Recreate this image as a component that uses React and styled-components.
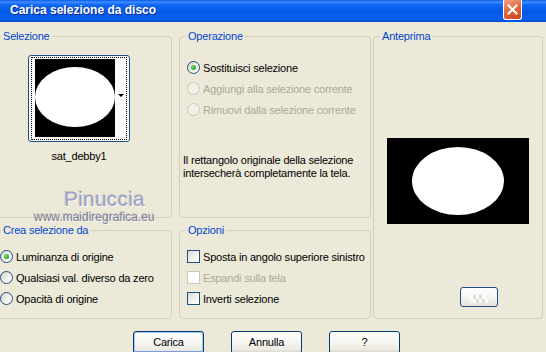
import React from 'react';
import styled, { createGlobalStyle } from 'styled-components';

const GlobalStyle = createGlobalStyle`
  html, body {
    margin: 0;
    padding: 0;
    background: #ece9d8;
    overflow: hidden;
  }
  body {
    font-family: "Liberation Sans", Arial, sans-serif;
    font-size: 11px;
    letter-spacing: -0.2px;
    color: #000;
  }
`;

const Window = styled.div`
  position: relative;
  width: 546px;
  height: 352px;
  overflow: hidden;
  background: #ece9d8;
  display: flex;
  flex-direction: column;
`;

const TitleBar = styled.div`
  flex: none;
  height: 22px;
  box-sizing: border-box;
  padding: 0 24px 2px 10px;
  display: flex;
  align-items: center;
  justify-content: space-between;
  background: linear-gradient(180deg, #0a5ae6 0%, #3d8dff 9%, #1165f2 22%, #0358e8 55%, #0a60f2 85%, #0049d4 100%);
`;

const Title = styled.span`
  font-family: "Liberation Sans", Arial, sans-serif;
  font-weight: bold;
  font-size: 12px;
  letter-spacing: 0;
  color: #fff;
  text-shadow: 1px 1px 0 #0a2a8a;
`;

const CloseButton = styled.div`
  align-self: flex-start;
  width: 19px;
  height: 20px;
  box-sizing: border-box;
  border: 1px solid #fff;
  border-top: none;
  border-radius: 0 0 3px 3px;
  background: linear-gradient(160deg, #f0a486 0%, #e36b43 45%, #c8461f 100%);
  display: flex;
  align-items: center;
  justify-content: center;
`;

const Panels = styled.div`
  display: flex;
  margin: 8px 0 0 -6px;
`;

const Column = styled.div`
  display: flex;
  flex-direction: column;
  gap: 6px;
  width: ${p => p.$w}px;
  margin-left: ${p => p.$ml || 0}px;
`;

const Group = styled.fieldset`
  margin: 0;
  padding: 0;
  box-sizing: border-box;
  height: ${p => p.$h}px;
  width: ${p => p.$w}px;
  margin-left: ${p => p.$ml || 0}px;
  border: 1px solid #d0d0bf;
  border-radius: 4px;
  min-width: 0;
`;

const Legend = styled.legend`
  margin-left: 6px;
  padding: 0 2px;
  line-height: 13px;
  color: #0046d5;
`;

const GroupBody = styled.div`
  display: flex;
  flex-direction: column;
  align-items: flex-start;
  padding: ${p => p.$pad};
`;

const ThumbWrap = styled.div`
  display: flex;
  flex-direction: column;
  align-items: center;
  margin-top: 12px;
`;

const ThumbButton = styled.div`
  width: 102px;
  height: 87px;
  box-sizing: border-box;
  padding: 1px 2px;
  border: 1px solid #1f4d86;
  border-radius: 3px;
  background: #fbfbf9;
  display: flex;
`;

const FocusRing = styled.div`
  flex: 1;
  display: flex;
  padding: 1px 1px 1px 3px;
  border: 1px dotted #000;
`;

const DropStrip = styled.div`
  flex: 1;
  display: flex;
  align-items: center;
  justify-content: flex-end;
  padding-bottom: 6px;
  padding-right: 1px;
`;

const Arrow = styled.div`
  width: 0;
  height: 0;
  border-left: 3px solid transparent;
  border-right: 3px solid transparent;
  border-top: 3px solid #000;
`;

const Caption = styled.div`
  margin-top: 8px;
  line-height: 13px;
`;

const OptionList = styled.div`
  display: flex;
  flex-direction: column;
  padding-left: ${p => p.$pl || 0}px;
`;

const OptionRow = styled.div`
  height: 21px;
  display: flex;
  align-items: center;
  gap: 3px;
  color: ${p => (p.$disabled ? '#aca899' : '#000')};
`;

const Radio = styled.span`
  width: 13px;
  height: 13px;
  box-sizing: border-box;
  border-radius: 50%;
  border: 1px solid ${p => (p.$disabled ? '#cac8bb' : '#1c5180')};
  background: ${p => (p.$disabled ? '#f1efe6' : 'linear-gradient(135deg, #d6d4ca 0%, #f2f1ea 55%, #ffffff 100%)')};
  display: flex;
  align-items: center;
  justify-content: center;
  &::after {
    content: '';
    display: ${p => (p.$checked ? 'block' : 'none')};
    width: 5px;
    height: 5px;
    border-radius: 50%;
    background: radial-gradient(circle at 35% 35%, #6fe06a 0%, #2fae2b 60%, #1d8a1a 100%);
  }
`;

const Check = styled.span`
  width: 13px;
  height: 13px;
  box-sizing: border-box;
  border: 1px solid ${p => (p.$disabled ? '#cac8bb' : '#1c5180')};
  background: ${p => (p.$disabled ? '#ffffff' : 'linear-gradient(135deg, #dcdcd5 0%, #f4f4f0 60%, #ffffff 100%)')};
`;

const Description = styled.div`
  margin-top: 34px;
  line-height: 13px;
`;

const Preview = styled.svg`
  display: block;
  margin-top: 95px;
`;

const SmallButton = styled.div`
  margin: 63px 0 0 73px;
  width: 38px;
  height: 20px;
  box-sizing: border-box;
  border: 1px solid #1f4d86;
  border-radius: 3px;
  background: linear-gradient(180deg, #ffffff 0%, #f4f4f0 55%, #e2e0d6 100%);
  display: flex;
  align-items: center;
  justify-content: center;
  padding-top: 3px;
`;

const ButtonRow = styled.div`
  display: flex;
  gap: 27px;
  padding-left: 133px;
  margin-top: 12px;
`;

const Button = styled.div`
  width: 71px;
  height: 23px;
  box-sizing: border-box;
  border: 1px solid #003c74;
  border-radius: 3px;
  background: linear-gradient(180deg, #ffffff 0%, #f5f5f1 50%, #ebe9e1 85%, #d6d0c5 100%);
  box-shadow: ${p => (p.$default ? 'inset 0 0 0 1px #aac5f2, inset 0 -1px 0 1px #7b9ee0' : 'inset 0 -1px 0 #e0ddd1')};
  display: flex;
  align-items: center;
  justify-content: center;
  padding-bottom: 1px;
`;

const Watermark = styled.div`
  position: absolute;
  left: ${p => p.$x}px;
  top: ${p => p.$y}px;
  font-family: "Liberation Sans", Arial, sans-serif;
  font-size: ${p => p.$size}px;
  line-height: ${p => p.$size}px;
  letter-spacing: ${p => p.$ls}px;
  color: ${p => p.$color};
  text-shadow: 1px 1px 0 rgba(255, 255, 255, 0.7), -1px -1px 0 rgba(120, 125, 150, 0.35);
  pointer-events: none;
`;

function Option({ label, checked, disabled, box }) {
  return (
    <OptionRow $disabled={disabled}>
      {box ? <Check $disabled={disabled} /> : <Radio $checked={checked} $disabled={disabled} />}
      <span>{label}</span>
    </OptionRow>
  );
}

export default function App() {
  return (
    <Window>
      <GlobalStyle />
      <TitleBar>
        <Title>Carica selezione da disco</Title>
        <CloseButton>
          <svg width="11" height="11" viewBox="0 0 11 11">
            <path d="M1.5 1.5 L9.5 9.5 M9.5 1.5 L1.5 9.5" stroke="#fff" strokeWidth="2" strokeLinecap="square" />
          </svg>
        </CloseButton>
      </TitleBar>

      <Panels>
        <Column $w={178}>
          <Group $h={188}>
            <Legend>Selezione</Legend>
            <GroupBody $pad="0 0 0 33px">
              <ThumbWrap>
                <ThumbButton>
                  <FocusRing>
                    <svg width="80" height="78" viewBox="0 0 80 78">
                      <rect width="80" height="78" fill="#000" />
                      <ellipse cx="40" cy="38" rx="40" ry="30" fill="#fff" />
                    </svg>
                    <DropStrip>
                      <Arrow />
                    </DropStrip>
                  </FocusRing>
                </ThumbButton>
                <Caption>sat_debby1</Caption>
              </ThumbWrap>
            </GroupBody>
          </Group>
          <Group $h={95}>
            <Legend>Crea selezione da</Legend>
            <GroupBody $pad="9px 0 0 5px">
              <OptionList>
                <Option label="Luminanza di origine" checked />
                <Option label="Qualsiasi val. diverso da zero" />
                <Option label="Opacità di origine" />
              </OptionList>
            </GroupBody>
          </Group>
        </Column>

        <Column $w={192} $ml={7}>
          <Group $h={188}>
            <Legend>Operazione</Legend>
            <GroupBody $pad="14px 0 0 3px">
              <OptionList $pl={4}>
                <Option label="Sostituisci selezione" checked />
                <Option label="Aggiungi alla selezione corrente" disabled />
                <Option label="Rimuovi dalla selezione corrente" disabled />
              </OptionList>
              <Description>
                Il rettangolo originale della selezione
                <br />
                intersecherà completamente la tela.
              </Description>
            </GroupBody>
          </Group>
          <Group $h={95}>
            <Legend>Opzioni</Legend>
            <GroupBody $pad="9px 0 0 7px">
              <OptionList>
                <Option box label="Sposta in angolo superiore sinistro" />
                <Option box disabled label="Espandi sulla tela" />
                <Option box label="Inverti selezione" />
              </OptionList>
            </GroupBody>
          </Group>
        </Column>

        <Group $h={289} $w={170} $ml={2}>
          <Legend>Anteprima</Legend>
          <GroupBody $pad="0 0 0 13px">
            <Preview width="142" height="86" viewBox="0 0 142 86">
              <rect width="142" height="86" fill="#000" />
              <ellipse cx="71" cy="43" rx="46" ry="34" fill="#fff" />
            </Preview>
            <SmallButton>
              <svg width="18" height="8" viewBox="0 0 18 8">
                <rect width="18" height="8" fill="#f3f2ee" />
                <rect x="0" y="0" width="3" height="4" fill="#ffffff" />
                <rect x="6" y="0" width="3" height="4" fill="#ffffff" />
                <rect x="12" y="0" width="3" height="4" fill="#ffffff" />
                <rect x="3" y="4" width="3" height="4" fill="#ffffff" />
                <rect x="9" y="4" width="3" height="4" fill="#ffffff" />
                <rect x="15" y="4" width="3" height="4" fill="#ffffff" />
                <rect x="3" y="0" width="3" height="4" fill="#dedcd4" />
                <rect x="9" y="0" width="3" height="4" fill="#dedcd4" />
                <rect x="6" y="4" width="3" height="4" fill="#dedcd4" />
                <rect x="12" y="4" width="3" height="4" fill="#dedcd4" />
              </svg>
            </SmallButton>
          </GroupBody>
        </Group>
      </Panels>

      <ButtonRow>
        <Button $default>Carica</Button>
        <Button>Annulla</Button>
        <Button>?</Button>
      </ButtonRow>

      <Watermark $x={64} $y={188} $size={21} $ls={0.2} $color="#9ea3c4">Pinuccia</Watermark>
      <Watermark $x={34} $y={211} $size={12} $ls={0} $color="#7f8192">www.maidiregrafica.eu</Watermark>
    </Window>
  );
}
